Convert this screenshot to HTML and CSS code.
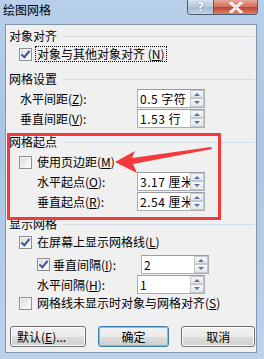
FILE: index.html
```html
<!DOCTYPE html>
<html lang="zh-CN">
<head>
  <meta charset="utf-8">
  <title>绘图网格</title>
  <link rel="stylesheet" href="styles.css">
</head>
<body>
  <div class="window">
    <div class="titlebar">
      <span class="title">绘图网格</span>
      <div class="caption-btns">
        <span class="cap-btn cap-help">?</span>
        <span class="cap-btn cap-close">
          <svg width="14" height="11" viewBox="0 0 14 11">
            <path d="M2 1 L12 10 M12 1 L2 10" stroke="#fff" stroke-width="3" stroke-linecap="square"/>
            <path d="M2 1 L12 10 M12 1 L2 10" stroke="#6b2a22" stroke-width="0.6" fill="none" opacity="0.4"/>
          </svg>
        </span>
      </div>
    </div>

    <div class="client">
      <div class="group-title heading-first">对象对齐</div>
      <div class="check-row">
        <span class="checkbox checked"></span>
        <span class="check-label focused">对象与其他对象对齐 (<u>N</u>)</span>
      </div>

      <div class="group-title heading-gap">网格设置</div>
      <div class="field-row">
        <span class="field-label">水平间距(<u>Z</u>):</span>
        <span class="spin-box"><span class="spin-text">0.5 字符</span><span class="spinner"><span class="spin-up"></span><span class="spin-down"></span></span></span>
      </div>
      <div class="field-row">
        <span class="field-label">垂直间距(<u>V</u>):</span>
        <span class="spin-box"><span class="spin-text">1.53 行</span><span class="spinner"><span class="spin-up"></span><span class="spin-down"></span></span></span>
      </div>

      <div class="group-title heading-gap2">网格起点</div>
      <div class="check-row tight">
        <span class="checkbox"></span>
        <span class="check-label">使用页边距(<u>M</u>)</span>
      </div>
      <div class="field-row indent">
        <span class="field-label">水平起点(<u>O</u>):</span>
        <span class="spin-box"><span class="spin-text">3.17 厘米</span><span class="spinner"><span class="spin-up"></span><span class="spin-down"></span></span></span>
      </div>
      <div class="field-row indent">
        <span class="field-label">垂直起点(<u>R</u>):</span>
        <span class="spin-box"><span class="spin-text">2.54 厘米</span><span class="spinner"><span class="spin-up"></span><span class="spin-down"></span></span></span>
      </div>

      <div class="group-title heading-gap3">显示网格</div>
      <div class="check-row">
        <span class="checkbox checked"></span>
        <span class="check-label">在屏幕上显示网格线(<u>L</u>)</span>
      </div>
      <div class="field-row nested">
        <span class="checkbox checked"></span>
        <span class="field-label">垂直间隔(<u>I</u>):</span>
        <span class="spin-box"><span class="spin-text">2</span><span class="spinner"><span class="spin-up"></span><span class="spin-down"></span></span></span>
      </div>
      <div class="field-row indent">
        <span class="field-label">水平间隔(<u>H</u>):</span>
        <span class="spin-box"><span class="spin-text">1</span><span class="spinner"><span class="spin-up"></span><span class="spin-down"></span></span></span>
      </div>
      <div class="check-row">
        <span class="checkbox"></span>
        <span class="check-label">网格线未显示时对象与网格对齐(<u>S</u>)</span>
      </div>

      <div class="button-row">
        <span class="btn btn-default-set">默认(<u>E</u>)...</span>
        <span class="btn btn-primary">确定</span>
        <span class="btn btn-cancel">取消</span>
      </div>

      <div class="highlight-box"></div>
      <svg class="arrow" width="100" height="30" viewBox="0 0 100 30">
        <path d="M0 15 L20 4 L17 11 L96 0 L97 2 L18 17 L22 26 Z" fill="#f23a3a"/>
      </svg>
    </div>
  </div>
</body>
</html>
```

FILE: styles.css
```css
* {
  margin: 0;
  padding: 0;
  box-sizing: border-box;
}

body {
  width: 264px;
  height: 359px;
  overflow: hidden;
  font-family: "Noto Sans CJK SC", "Liberation Sans", sans-serif;
  font-size: 12px;
  color: #000;
}

u {
  text-decoration: underline;
}

.window {
  width: 264px;
  height: 359px;
  display: flex;
  flex-direction: column;
  background: linear-gradient(to bottom, #b7cfe9 0%, #a9c4e4 40%, #bcd3ec 100%);
}

.titlebar {
  height: 24px;
  display: flex;
  align-items: flex-start;
  flex-shrink: 0;
}

.title {
  padding: 2px 0 0 3px;
  font-size: 12px;
  line-height: 16px;
  color: #000;
}

.caption-btns {
  margin-left: auto;
  margin-right: 6px;
  display: flex;
  height: 15px;
  border: 1px solid #4c5d78;
  border-top: none;
  border-radius: 0 0 4px 4px;
  overflow: hidden;
}

.cap-btn {
  display: flex;
  align-items: center;
  justify-content: center;
  height: 14px;
  font-family: "DejaVu Sans", sans-serif;
  font-weight: bold;
  font-size: 12px;
  color: #fff;
  text-shadow: 0 0 1px #333;
}

.cap-help {
  width: 26px;
  border-right: 1px solid #4c5d78;
  background: linear-gradient(to bottom, #d7e2ef, #b6c8de 50%, #a4b8d2 51%, #c2d3e8);
}

.cap-close {
  width: 43px;
  background: linear-gradient(to bottom, #e6a699, #d16f5c 50%, #c4402c 51%, #d9836b);
}

.client {
  position: relative;
  flex: 1;
  margin: 0 7px 6px 5px;
  border: 1px solid #8596ab;
  background: #f0f0f0;
  padding: 0 1px 0 3px;
}

.group-title {
  height: 18px;
  line-height: 18px;
  display: flex;
  align-items: center;
  color: #000;
}

.group-title::after {
  content: "";
  flex: 1;
  height: 0;
  border-top: 1px solid #d5dfe5;
  margin-left: 6px;
  margin-top: 1px;
}

.heading-first { margin-top: 2px; }
.heading-gap { margin-top: 7px; }
.heading-gap2 { margin-top: 5px; }
.heading-gap3 { margin-top: 4px; }

.check-row {
  height: 18px;
  display: flex;
  align-items: center;
  padding-left: 10px;
}

.check-row.tight {
  margin-top: 2px;
}

.checkbox {
  width: 13px;
  height: 13px;
  flex-shrink: 0;
  border: 1px solid #8e8f8f;
  background: linear-gradient(135deg, #d8d8d8, #f4f4f4 70%, #fff);
  box-shadow: inset 0 0 0 1px #f4f4f4;
  position: relative;
}

.checkbox.checked::after {
  content: "";
  position: absolute;
  left: 3px;
  top: 0px;
  width: 3px;
  height: 7px;
  border: solid #3c55a0;
  border-width: 0 2px 2px 0;
  transform: rotate(40deg);
}

.check-label {
  margin-left: 3px;
  padding: 0 1px;
  line-height: 14px;
  border: 1px solid transparent;
}

.check-label.focused {
  border: 1px dotted #000;
}

.field-row {
  height: 20px;
  display: flex;
  align-items: center;
  padding-left: 11px;
}

.field-row.indent {
  padding-left: 28px;
}

.field-row.nested {
  padding-left: 28px;
  margin-top: 3px;
}

.field-row.nested .field-label {
  width: 88px;
  margin-left: 3px;
}

.field-label {
  width: 117px;
}

.field-row.indent .field-label {
  width: 100px;
}

.spin-box {
  width: 68px;
  height: 19px;
  display: flex;
  border: 1px solid #abadb3;
  border-top-color: #9a9ca3;
  background: #fff;
  overflow: hidden;
}

.spin-text {
  flex: 1;
  padding-left: 2px;
  line-height: 17px;
  white-space: nowrap;
  overflow: hidden;
  font-size: 12px;
  letter-spacing: 0.5px;
}

.spinner {
  width: 14px;
  display: flex;
  flex-direction: column;
  flex-shrink: 0;
}

.spin-up,
.spin-down {
  flex: 1;
  position: relative;
  border: 1px solid #c4c7cc;
  background: linear-gradient(to bottom, #f5f6f7, #e4e7ea);
}

.spin-up::after,
.spin-down::after {
  content: "";
  position: absolute;
  left: 3px;
  width: 0;
  height: 0;
  border-left: 3px solid transparent;
  border-right: 3px solid transparent;
}

.spin-up::after {
  top: 2px;
  border-bottom: 3px solid #5173b8;
}

.spin-down::after {
  top: 2px;
  border-top: 3px solid #5173b8;
}

.button-row {
  display: flex;
  margin-top: 14px;
  padding-left: 1px;
  gap: 12px;
}

.btn {
  height: 21px;
  display: flex;
  align-items: center;
  justify-content: center;
  border: 1px solid #707070;
  border-radius: 3px;
  background: linear-gradient(to bottom, #f2f2f2 0%, #ebebeb 50%, #dddddd 51%, #cfcfcf 100%);
  box-shadow: inset 0 0 0 1px #fcfcfc;
}

.btn-default-set {
  width: 76px;
  justify-content: flex-start;
  padding-left: 6px;
}

.btn-primary {
  width: 72px;
  border-color: #3c7fb1;
  box-shadow: inset 0 0 0 1px #48d8fb;
}

.btn-cancel {
  width: 74px;
}

.highlight-box {
  position: absolute;
  left: 1px;
  top: 108px;
  width: 214px;
  height: 87px;
  border: 3px solid #f23a3a;
}

.arrow {
  position: absolute;
  left: 109px;
  top: 122px;
}
```
